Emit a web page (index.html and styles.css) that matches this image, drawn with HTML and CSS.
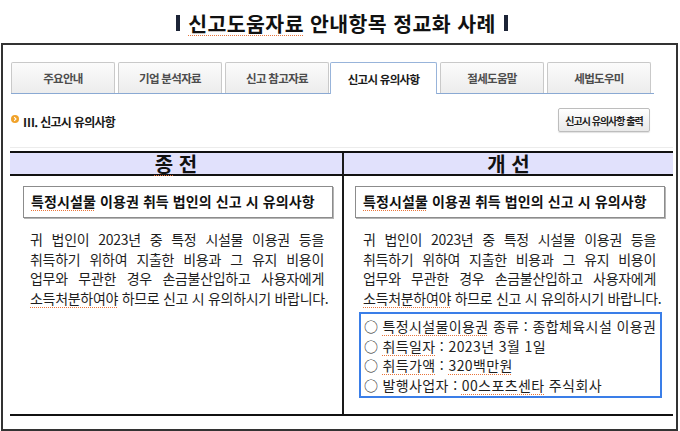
FILE: index.html
```html
<!DOCTYPE html>
<html lang="ko">
<head>
<meta charset="utf-8">
<title>신고도움자료 안내항목 정교화 사례</title>
<link rel="stylesheet" href="styles.css">
</head>
<body>
<div class="title">
  <span class="bar"></span>
  <h1><span class="sp">신고도움자료</span> 안내항목 정교화 사례</h1>
  <span class="bar"></span>
</div>
<div class="frame">
  <div class="tabs">
    <div class="tab">주요안내</div>
    <div class="tab">기업 분석자료</div>
    <div class="tab">신고 참고자료</div>
    <div class="tab active">신고시 유의사항</div>
    <div class="tab">절세도움말</div>
    <div class="tab">세법도우미</div>
  </div>
  <div class="head">
    <div class="sec">
      <svg class="dot" width="8" height="8" viewBox="0 0 8 8"><circle cx="4" cy="4" r="4" fill="#f0a22a"/><path d="M3.2 2.2 L5 4 L3.2 5.8" fill="none" stroke="#fff" stroke-width="1.1"/></svg>
      <span>Ⅲ. 신고시 유의사항</span>
    </div>
    <button class="btn">신고시 유의사항 출력</button>
  </div>
  <div class="cmp">
    <div class="hd l"><span class="sp">종</span> 전</div>
    <div class="hd r">개 선</div>
    <div class="bd l">
      <div class="box"><span class="sp">특정시설물</span> 이용권 취득 법인의 신고 시 유의사항</div>
      <p class="para">
        <span class="ln">귀 법인이 2023년 중 특정 시설물 이용권 등을</span>
        <span class="ln">취득하기 위하여 지출한 비용과 그 유지 비용이</span>
        <span class="ln">업무와 무관한 경우 손금불산입하고 사용자에게</span>
        <span class="ln last"><span class="sp">소득처분하여야</span> 하므로 신고 시 유의하시기 바랍니다.</span>
      </p>
    </div>
    <div class="bd r">
      <div class="box"><span class="sp">특정시설물</span> 이용권 취득 법인의 신고 시 유의사항</div>
      <p class="para">
        <span class="ln">귀 법인이 2023년 중 특정 시설물 이용권 등을</span>
        <span class="ln">취득하기 위하여 지출한 비용과 그 유지 비용이</span>
        <span class="ln">업무와 무관한 경우 손금불산입하고 사용자에게</span>
        <span class="ln last"><span class="sp">소득처분하여야</span> 하므로 신고 시 유의하시기 바랍니다.</span>
      </p>
      <ul class="list">
        <li><span class="c">○</span><span class="sp">특정시설물이용권</span> 종류 : 종합체육시설 이용권</li>
        <li><span class="c">○</span><span class="sp">취득일자</span> : 2023년 3월 1일</li>
        <li><span class="c">○</span><span class="sp">취득가액</span> : <span class="sp">320백만원</span></li>
        <li><span class="c">○</span>발행사업자 : <span class="sp">00스포츠센타</span> 주식회사</li>
      </ul>
    </div>
  </div>
</div>
</body>
</html>
```
FILE: styles.css
```css
* { box-sizing: border-box; }
html, body { margin: 0; padding: 0; background: #fff; }
body {
  width: 680px;
  height: 431px;
  overflow: hidden;
  font-family: "Noto Sans CJK KR", "Noto Sans", sans-serif;
  color: #1a1a1a;
}
.sp {
  text-decoration: underline dotted #e8743a;
  text-decoration-thickness: 1px;
  text-underline-offset: 3px;
}
.title {
  height: 43px;
  display: flex;
  align-items: center;
  justify-content: center;
  gap: 8px;
  padding: 2px 0 0 4px;
}
.title h1 {
  margin: 0;
  font-size: 20.5px;
  font-weight: 700;
  letter-spacing: 0.4px;
  color: #111;
}
.bar {
  display: inline-block;
  width: 4px;
  height: 16px;
  background: #1c2436;
}
.frame {
  margin-left: 1px;
  width: 677px;
  height: 388px;
  border: 2px solid #333;
}
.tabs {
  margin: 17px 0 0 8px;
  width: 643px;
  height: 32px;
  display: flex;
  gap: 3px;
  border-bottom: 1px solid #8aa9d3;
}
.tab {
  width: 104px;
  height: 31px;
  border: 1px solid #c9c9c9;
  border-bottom: none;
  border-radius: 2px 2px 0 0;
  background: linear-gradient(#fbfbfb, #ececec);
  font-size: 11.5px;
  font-weight: 700;
  letter-spacing: -0.7px;
  color: #4d4d4d;
  display: flex;
  align-items: center;
  justify-content: center;
}
.tab.active {
  height: 32px;
  margin-left: -2px;
  width: 107px;
  background: #fff;
  border-color: #98b4da;
  color: #1a1a1a;
  margin-bottom: -1px;
}
.head {
  margin-left: 7px;
  width: 663px;
  display: flex;
  justify-content: space-between;
  align-items: center;
  padding: 14px 23px 15px 1px;
  border-bottom: 1px solid #ececec;
}
.sec {
  display: flex;
  align-items: center;
  gap: 4px;
  font-size: 12px;
  font-weight: 700;
  letter-spacing: -0.7px;
  color: #1a1a1a;
  padding-top: 3px;
}
.dot { margin-top: -6px; }
.btn {
  width: 92px;
  height: 24px;
  padding: 0;
  border: 1px solid #bdbdbd;
  border-radius: 2px;
  background: linear-gradient(#ffffff, #e9e9e9);
  box-shadow: 0 1px 1px rgba(0,0,0,0.12);
  font-family: "Noto Sans CJK KR", sans-serif;
  font-size: 10px;
  font-weight: 700;
  letter-spacing: -1px;
  color: #222;
}
.cmp {
  margin: 3px 0 0 7px;
  width: 663px;
  display: grid;
  grid-template-columns: 334px 329px;
  border-top: 2px solid #111;
  border-bottom: 2px solid #111;
}
.hd {
  height: 23px;
  background: #e1e1fc;
  border-bottom: 2px solid #111;
  text-align: center;
  font-size: 20px;
  font-weight: 700;
  line-height: 21px;
  color: #111;
}
.l { border-right: 2px solid #1a1a1a; }
.bd { padding: 10px 0 16px 0; }
.bd.l { padding-left: 13px; }
.bd.r { padding-left: 11px; }
.box {
  width: 310px;
  height: 32px;
  border: 1px solid #8c8c8c;
  box-shadow: 1px 1px 0 #b5b5b5;
  padding-left: 7px;
  font-size: 14px;
  font-weight: 700;
  letter-spacing: 0.1px;
  line-height: 29px;
  color: #111;
  white-space: nowrap;
}
.para {
  margin: 12px 0 0 7px;
  width: 294px;
  font-size: 14px;
  letter-spacing: -0.3px;
  line-height: 19.5px;
  color: #1e1e1e;
}
.bd.r .para { margin-left: 8px; width: 293px; }
.ln {
  display: block;
  white-space: nowrap;
  text-align: justify;
  text-align-last: justify;
}
.ln.last { text-align-last: auto; }
.list {
  list-style: none;
  margin: 4px 0 0 4px;
  padding: 3px 4px 1px 3px;
  width: 303px;
  border: 2px solid #3a7ee8;
  font-size: 14px;
  letter-spacing: 0.4px;
  line-height: 19.5px;
  color: #1e1e1e;
}
.list li { white-space: nowrap; }
.c { margin-right: 4px; }
```
